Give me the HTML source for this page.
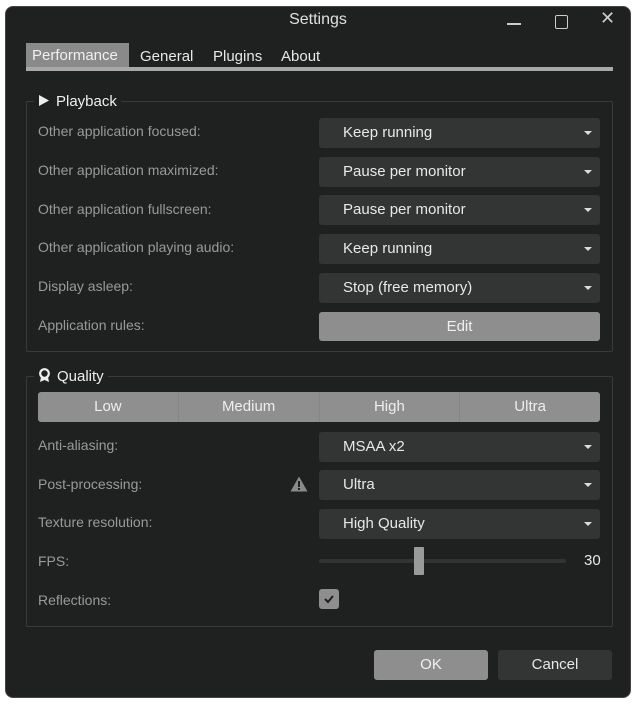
<!DOCTYPE html>
<html><head><meta charset="utf-8"><style>
*{margin:0;padding:0;box-sizing:border-box}
body{width:636px;height:704px;background:#fff;font-family:"Liberation Sans",sans-serif;position:relative;overflow:hidden}
.win{position:absolute;left:5px;top:6px;width:626px;height:692px;background:#1f2020;border-radius:8px;border:1px solid #444}
.a{position:absolute}
.lbl{position:absolute;left:38px;color:#9a9a9a;font-size:14px;line-height:30px}
.dd{position:absolute;left:319px;width:281px;height:30px;background:#333434;border-radius:3px;color:#e8e8e8;font-size:15px;line-height:30px;padding-left:24px}
.dd:after{content:"";position:absolute;right:8px;top:13px;border-left:4px solid transparent;border-right:4px solid transparent;border-top:4px solid #ddd}
.grp{position:absolute;left:26px;width:587px;border:1px solid #3a3a3a;border-radius:2px}
.gt{position:absolute;background:#1f2020;color:#eee;font-size:15px;padding:0 4px;line-height:20px}
</style></head><body>
<div class="win"></div>
<div class="a" style="left:0;top:11px;width:636px;text-align:center;color:#e0e0e0;font-size:16px">Settings</div>
<div class="a" style="left:507px;top:23px;width:14px;height:2px;background:#ccc"></div>
<div class="a" style="left:555px;top:15px;width:13px;height:14px;border:1.5px solid #ccc;border-radius:2px"></div>
<div class="a" style="left:600px;top:8px;color:#ccc;font-size:18px">✕</div>
<div class="a" style="left:26px;top:43px;width:103px;height:25px;background:#8a8a8a"></div>
<div class="a" style="left:32px;top:47px;color:#f0f0f0;font-size:15px">Performance</div>
<div class="a" style="left:140px;top:48px;color:#e8e8e8;font-size:15px">General</div>
<div class="a" style="left:213px;top:48px;color:#e8e8e8;font-size:15px">Plugins</div>
<div class="a" style="left:281px;top:48px;color:#e8e8e8;font-size:15px">About</div>
<div class="a" style="left:26px;top:67px;width:587px;height:4px;background:#a8a8a8"></div>

<div class="grp" style="top:101px;height:251px"></div>
<div class="gt" style="left:34px;top:92px"><svg width="12" height="13" viewBox="0 0 12 13" style="vertical-align:-1px;margin-right:6px"><path d="M1 1 L11 6.5 L1 12 Z" fill="#eee"/></svg>Playback</div>
<div class="lbl" style="top:116px">Other application focused:</div>
<div class="dd" style="top:118px">Keep running</div>
<div class="lbl" style="top:155px">Other application maximized:</div>
<div class="dd" style="top:157px">Pause per monitor</div>
<div class="lbl" style="top:194px">Other application fullscreen:</div>
<div class="dd" style="top:195px">Pause per monitor</div>
<div class="lbl" style="top:232px">Other application playing audio:</div>
<div class="dd" style="top:234px">Keep running</div>
<div class="lbl" style="top:271px">Display asleep:</div>
<div class="dd" style="top:273px">Stop (free memory)</div>
<div class="lbl" style="top:310px">Application rules:</div>
<div class="a" style="left:319px;top:312px;width:281px;height:29px;background:#8e8e8e;border-radius:3px;color:#f0f0f0;font-size:15px;line-height:29px;text-align:center">Edit</div>

<div class="grp" style="top:376px;height:251px"></div>
<div class="gt" style="left:34px;top:367px"><svg width="13" height="15" viewBox="0 0 13 15" style="vertical-align:-2px;margin-right:6px"><circle cx="6.5" cy="5.5" r="4.3" fill="none" stroke="#eee" stroke-width="2.2"/><path d="M3 9 L2 14 L6.5 12 L11 14 L10 9 Z" fill="#eee"/></svg>Quality</div>
<div class="a" style="left:38px;top:392px;width:562px;height:30px;background:#8f8f8f;border-radius:3px;display:flex;color:#eee;font-size:15px;line-height:30px">
<div style="flex:1;text-align:center;border-right:1px solid #858585">Low</div>
<div style="flex:1;text-align:center;border-right:1px solid #858585">Medium</div>
<div style="flex:1;text-align:center;border-right:1px solid #858585">High</div>
<div style="flex:1;text-align:center">Ultra</div></div>
<div class="lbl" style="top:430px">Anti-aliasing:</div>
<div class="dd" style="top:432px">MSAA x2</div>
<div class="lbl" style="top:469px">Post-processing:</div>
<svg class="a" style="left:290px;top:476px" width="18" height="16" viewBox="0 0 18 16"><path d="M9 0.5 L17.5 15.5 L0.5 15.5 Z" fill="#8a8a8a"/><rect x="8" y="5" width="2" height="6" fill="#1f2020"/><rect x="8" y="12" width="2" height="2" fill="#1f2020"/></svg>
<div class="dd" style="top:470px">Ultra</div>
<div class="lbl" style="top:507px">Texture resolution:</div>
<div class="dd" style="top:509px">High Quality</div>
<div class="lbl" style="top:546px">FPS:</div>
<div class="a" style="left:319px;top:559px;width:247px;height:4px;background:#333;border-radius:2px"></div>
<div class="a" style="left:414px;top:547px;width:10px;height:28px;background:#9a9a9a;border-radius:1px"></div>
<div class="a" style="left:584px;top:552px;color:#e8e8e8;font-size:15px">30</div>
<div class="lbl" style="top:585px">Reflections:</div>
<div class="a" style="left:319px;top:589px;width:20px;height:20px;background:#8e8e8e;border-radius:3px"><svg width="20" height="20" viewBox="0 0 20 20"><path d="M6 10 L9 13 L14 7" fill="none" stroke="#1f1f1f" stroke-width="2"/></svg></div>

<div class="a" style="left:374px;top:650px;width:114px;height:30px;background:#8e8e8e;border-radius:3px;color:#f0f0f0;font-size:15px;line-height:30px;text-align:center">OK</div>
<div class="a" style="left:498px;top:650px;width:114px;height:30px;background:#333434;border-radius:3px;color:#e8e8e8;font-size:15px;line-height:30px;text-align:center">Cancel</div>
</body></html>
